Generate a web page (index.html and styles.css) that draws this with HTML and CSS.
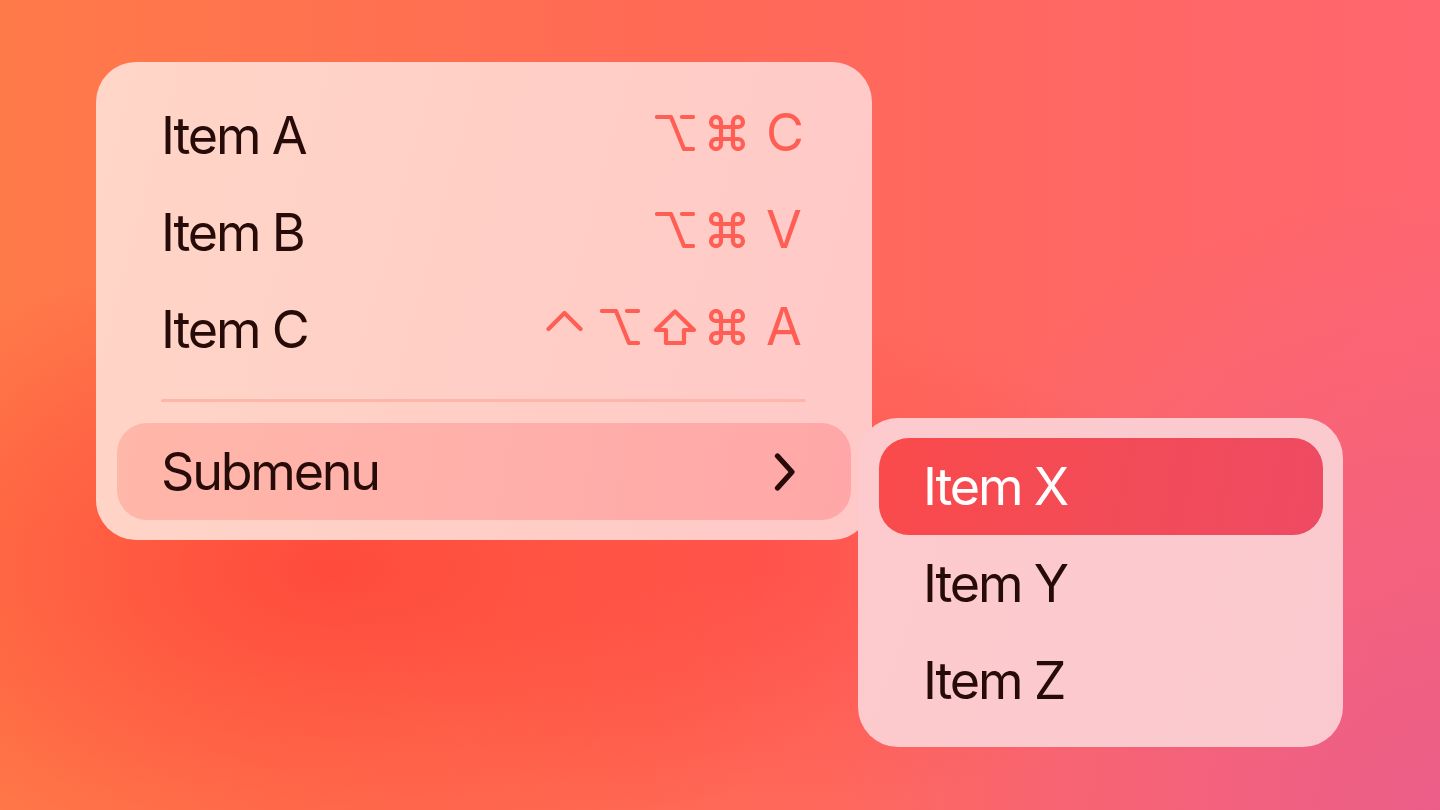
FILE: index.html
```html
<!DOCTYPE html>
<html>
<head>
<meta charset="utf-8">
<link rel="stylesheet" href="styles.css">
</head>
<body>
<div class="stage">
  <div class="menu main-menu">
    <div class="row">
      <span class="label">Item A</span>
      <span class="keys">
        <svg class="k k-opt" width="40" height="36" viewBox="0 0 40 36"><path d="M2 2 H16 L29 34 H38 M27 2 H38"/></svg>
        <svg class="k k-cmd" width="38" height="36" viewBox="0 0 38 36"><path d="M13 7 A5 5 0 1 0 8 12 H30 A5 5 0 1 0 25 7 V29 A5 5 0 1 0 30 24 H8 A5 5 0 1 0 13 29 Z"/></svg>
        <span class="key-letter">C</span>
      </span>
    </div>
    <div class="row">
      <span class="label">Item B</span>
      <span class="keys">
        <svg class="k k-opt" width="40" height="36" viewBox="0 0 40 36"><path d="M2 2 H16 L29 34 H38 M27 2 H38"/></svg>
        <svg class="k k-cmd" width="38" height="36" viewBox="0 0 38 36"><path d="M13 7 A5 5 0 1 0 8 12 H30 A5 5 0 1 0 25 7 V29 A5 5 0 1 0 30 24 H8 A5 5 0 1 0 13 29 Z"/></svg>
        <span class="key-letter">V</span>
      </span>
    </div>
    <div class="row">
      <span class="label">Item C</span>
      <span class="keys">
        <svg class="k k-ctrl" width="37" height="36" viewBox="0 0 37 36"><path d="M2.5 20 L18.5 4 L34.5 20"/></svg>
        <svg class="k k-opt" width="40" height="36" viewBox="0 0 40 36"><path d="M2 2 H16 L29 34 H38 M27 2 H38"/></svg>
        <svg class="k k-shift" width="44" height="36" viewBox="0 0 44 36"><path d="M22 2.5 L3 21 H13 V34 H31 V21 H41 Z"/></svg>
        <svg class="k k-cmd" width="38" height="36" viewBox="0 0 38 36"><path d="M13 7 A5 5 0 1 0 8 12 H30 A5 5 0 1 0 25 7 V29 A5 5 0 1 0 30 24 H8 A5 5 0 1 0 13 29 Z"/></svg>
        <span class="key-letter">A</span>
      </span>
    </div>
    <div class="separator"></div>
    <div class="row row-open">
      <span class="label">Submenu</span>
      <svg class="chevron" width="22" height="38" viewBox="0 0 22 38"><path d="M3.5 3 L18 19 L3.5 35"/></svg>
    </div>
  </div>

  <div class="menu sub-menu">
    <div class="row row-active"><span class="label">Item X</span></div>
    <div class="row"><span class="label">Item Y</span></div>
    <div class="row"><span class="label">Item Z</span></div>
  </div>
</div>
</body>
</html>
```

FILE: styles.css
```css
html, body {
  margin: 0;
  padding: 0;
}

body {
  width: 1440px;
  height: 810px;
  overflow: hidden;
  font-family: Inter, "Noto Sans", "Liberation Sans", sans-serif;
  background:
    radial-gradient(ellipse 560px 320px at 330px 570px, rgba(255, 72, 58, 0.95), rgba(255, 72, 58, 0) 100%),
    radial-gradient(ellipse 420px 260px at 760px 560px, rgba(255, 72, 72, 0.6), rgba(255, 72, 72, 0) 100%),
    radial-gradient(circle at 100% 100%, #ec5e88 0, rgba(236, 94, 136, 0) 620px),
    linear-gradient(90deg, #ff7a49 0%, #ff6a55 45%, #ff6670 100%);
}

.stage {
  position: relative;
  width: 1440px;
  height: 810px;
  padding: 62px 0 0 96px;
  box-sizing: border-box;
}

.menu {
  box-sizing: border-box;
  border-radius: 40px;
  display: flex;
  flex-direction: column;
}

.main-menu {
  width: 776px;
  height: 478px;
  padding: 25px 21px 20px;
  background: linear-gradient(105deg, #ffd6c7 0%, #ffcdc6 60%, #ffc8c8 100%);
}

.sub-menu {
  position: absolute;
  left: 858px;
  top: 418px;
  width: 485px;
  height: 329px;
  padding: 20px 20px 18px 21px;
  background: linear-gradient(110deg, #fdcbcd 0%, #fac9cf 100%);
}

.row {
  height: 97px;
  flex: none;
  display: flex;
  align-items: center;
  padding: 0 49px 0 44px;
  border-radius: 30px;
  color: #260b09;
}

.label {
  font-size: 52px;
  font-weight: 400;
  letter-spacing: -2.2px;
  line-height: 1;
}

.keys {
  margin-left: auto;
  display: flex;
  align-items: center;
  color: #ff5e55;
  margin-top: -6px;
}

.k {
  display: block;
  fill: none;
  stroke: #ff5e55;
  stroke-width: 4.2;
  stroke-linecap: round;
  stroke-linejoin: round;
}

.k-ctrl { margin-right: 17px; }
.k-opt { margin-right: 13px; }
.k-shift { margin-right: 11px; }
.k-cmd { margin-right: 20px; }

.key-letter {
  width: 36px;
  font-size: 52px;
  line-height: 1;
  text-align: left;
}

.separator {
  flex: none;
  height: 3px;
  margin: 21px 45px 21px 44px;
  border-radius: 2px;
  background: #ffb6aa;
}

.row-open {
  background: linear-gradient(100deg, #ffb7a9 0%, #ffaeaa 60%, #ffa7a8 100%);
}

.chevron {
  margin-left: auto;
  margin-right: 6px;
  fill: none;
  stroke: #260b09;
  stroke-width: 5.2;
  stroke-linecap: round;
  stroke-linejoin: round;
}

.sub-menu .row {
  padding-left: 44px;
}

.row-active {
  background: linear-gradient(100deg, #fa4a4b 0%, #f24b58 55%, #ee4a62 100%);
  color: #ffffff;
}
```
